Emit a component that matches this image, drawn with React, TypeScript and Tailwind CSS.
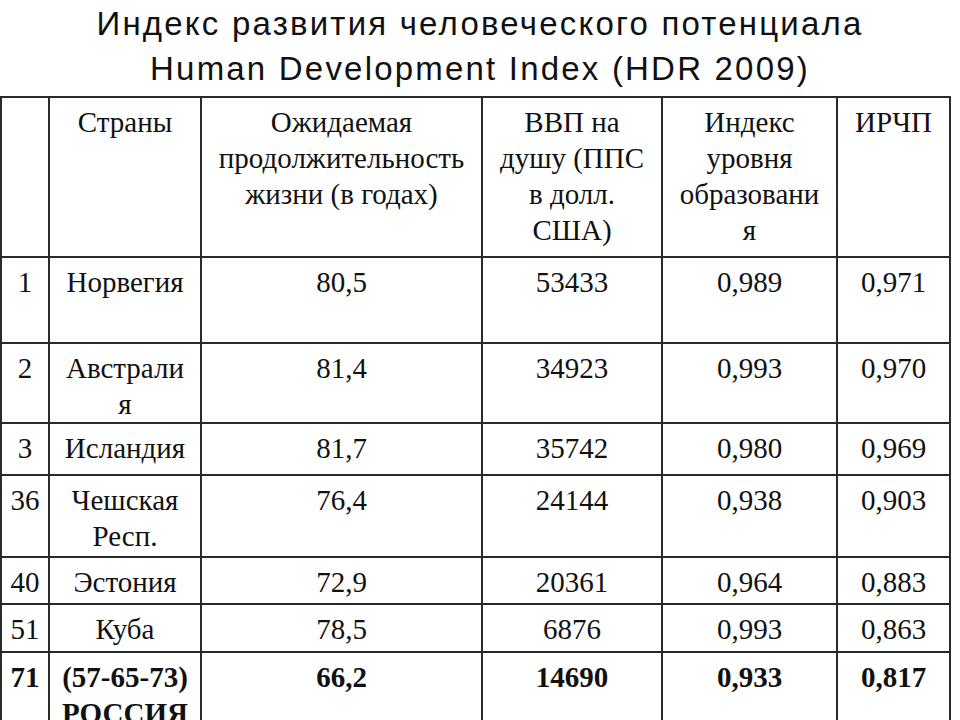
import React from "react";

type Row = {
  rank: string;
  country: React.ReactNode;
  life: string;
  gdp: string;
  edu: string;
  hdi: string;
  h: string;
  bold?: boolean;
};

const rows: Row[] = [
  { rank: "1", country: "Норвегия", life: "80,5", gdp: "53433", edu: "0,989", hdi: "0,971", h: "h-[86px]" },
  {
    rank: "2",
    country: (
      <>
        Австрали
        <br />я
      </>
    ),
    life: "81,4",
    gdp: "34923",
    edu: "0,993",
    hdi: "0,970",
    h: "h-[80px]",
  },
  { rank: "3", country: "Исландия", life: "81,7", gdp: "35742", edu: "0,980", hdi: "0,969", h: "h-[52px]" },
  {
    rank: "36",
    country: (
      <>
        Чешская
        <br />
        Респ.
      </>
    ),
    life: "76,4",
    gdp: "24144",
    edu: "0,938",
    hdi: "0,903",
    h: "h-[82px]",
  },
  { rank: "40", country: "Эстония", life: "72,9", gdp: "20361", edu: "0,964", hdi: "0,883", h: "h-[47px]" },
  { rank: "51", country: "Куба", life: "78,5", gdp: "6876", edu: "0,993", hdi: "0,863", h: "h-[48px]" },
  {
    rank: "71",
    country: (
      <>
        (57-65-73)
        <br />
        РОССИЯ
      </>
    ),
    life: "66,2",
    gdp: "14690",
    edu: "0,933",
    hdi: "0,817",
    h: "h-[90px]",
    bold: true,
  },
];

const cell = "border-2 border-[#2a2a2a] px-0 pt-[6px] align-top text-center";

export default function App() {
  return (
    <div className="h-[720px] w-[960px] overflow-hidden bg-white text-[#111]">
      {/* Title */}
      <div className="pt-[1px] text-center font-['Liberation_Sans',Arial,sans-serif] text-[33px] leading-[45px] tracking-[2.2px] text-[#111]">
        <div>Индекс развития человеческого потенциала</div>
        <div>Human Development Index (HDR 2009)</div>
      </div>

      <table className="mt-[5px] w-[949px] table-fixed border-collapse font-['Liberation_Serif','Times_New_Roman',serif] text-[29px] leading-[36px]">
        <colgroup>
          <col className="w-[48px]" />
          <col className="w-[152px]" />
          <col className="w-[281px]" />
          <col className="w-[180px]" />
          <col className="w-[175px]" />
          <col className="w-[113px]" />
        </colgroup>
        <thead>
          <tr className="h-[160px]">
            <th className={`${cell} font-normal`}></th>
            <th className={`${cell} font-normal`}>Страны</th>
            <th className={`${cell} font-normal`}>
              Ожидаемая
              <br />
              продолжительность
              <br />
              жизни (в годах)
            </th>
            <th className={`${cell} font-normal`}>
              ВВП на
              <br />
              душу (ППС
              <br />
              в долл.
              <br />
              США)
            </th>
            <th className={`${cell} font-normal`}>
              Индекс
              <br />
              уровня
              <br />
              образовани
              <br />я
            </th>
            <th className={`${cell} font-normal`}>ИРЧП</th>
          </tr>
        </thead>
        <tbody>
          {rows.map((r) => (
            <tr key={r.rank} className={`${r.h} ${r.bold ? "font-bold" : ""}`}>
              <td className={cell}>{r.rank}</td>
              <td className={cell}>{r.country}</td>
              <td className={cell}>{r.life}</td>
              <td className={cell}>{r.gdp}</td>
              <td className={cell}>{r.edu}</td>
              <td className={cell}>{r.hdi}</td>
            </tr>
          ))}
        </tbody>
      </table>
    </div>
  );
}
